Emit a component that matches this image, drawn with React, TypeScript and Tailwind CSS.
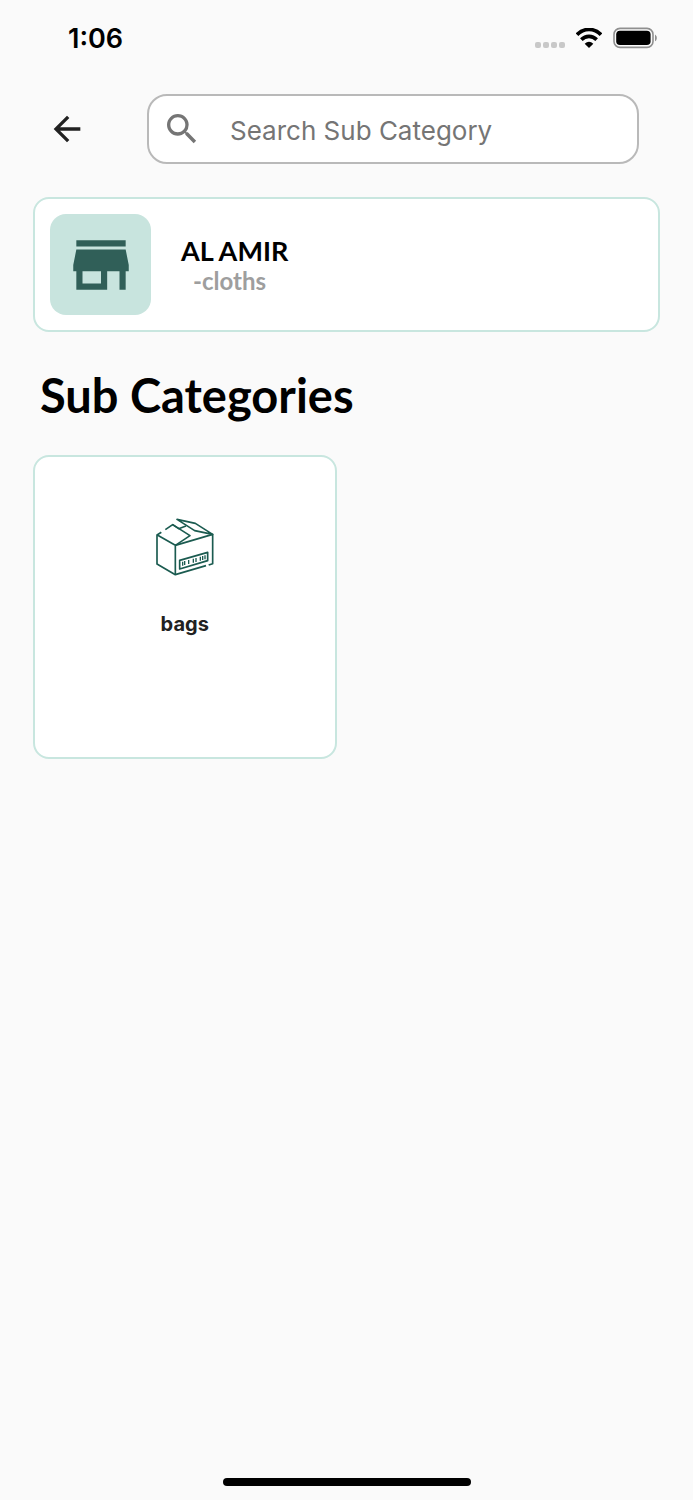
import { MdArrowBack, MdSearch, MdStore } from "react-icons/md";

interface SubCategory {
  id: string;
  name: string;
}

const store = { name: "AL AMIR", category: "cloths" };

const subCategories: SubCategory[] = [{ id: "bags", name: "bags" }];

function WifiIcon() {
  return (
    <svg viewBox="0 0 78 60" className="w-[26px] h-5" fill="none" aria-hidden="true">
      <path d="M3 20C23 -1 55 -1 75 20" stroke="black" strokeWidth="11" />
      <path d="M16 35C29 22 49 22 62 35" stroke="black" strokeWidth="11" />
      <path d="M26 47Q39 36 52 47L39 60Z" fill="black" />
    </svg>
  );
}

function BatteryIcon() {
  return (
    <svg viewBox="0 0 44 22" className="w-11 h-[22px]" fill="none" aria-hidden="true">
      <rect x="1" y="1.4" width="39" height="19" rx="6" stroke="#8f8f8f" strokeWidth="1.6" />
      <rect x="3.2" y="3.8" width="34.4" height="14.2" rx="3.8" fill="black" />
      <path d="M42 7.6c2.4 1.4 2.4 5.2 0 6.6z" fill="#8f8f8f" />
    </svg>
  );
}

function BoxIcon() {
  return (
    <svg
      viewBox="34 24 174 174"
      className="w-[58px] h-[58px]"
      fill="none"
      stroke="#1b5b50"
      strokeWidth="5"
      strokeLinejoin="round"
      aria-hidden="true"
    >
      {/* body */}
      <path d="M50 67L37 75V162L92 194L184 167" />
      <path d="M38 75L92 106V194" />
      <path d="M92 106L204 73V161L192 165" />
      {/* flaps */}
      <path d="M62 59L84 44L136 77L92 106" />
      <path d="M84 44L102 56L124 48" />
      <path d="M97 28L152 40L204 73L150 62Z" />
      {/* label */}
      <path d="M105 151L189 127V152L105 177Z" />
      <path d="M114 155v12M120 153v12M132 150v12M146 146v12M154 144v12M167 140v12M174 138v12M181 136v12" strokeWidth="4" />
    </svg>
  );
}

function StatusBar() {
  return (
    <div className="flex items-center justify-between h-[76px] pl-[68px] pr-9">
      <span className="pt-[2px] text-[27px] leading-8 font-semibold text-black">1:06</span>
      <div className="flex items-center gap-[11px]">
        <div className="flex gap-[2px] pt-[14px]">
          {[0, 1, 2, 3].map((dot) => (
            <span key={dot} className="w-[6px] h-[6px] rounded-[2px] bg-[#c8c8c8]" />
          ))}
        </div>
        <WifiIcon />
        <BatteryIcon />
      </div>
    </div>
  );
}

function SearchBar() {
  return (
    <header className="flex items-center pl-[47px] pr-[54px] mt-[18px]">
      <button type="button" aria-label="Back" className="text-[#212121]">
        <MdArrowBack className="w-10 h-10" />
      </button>
      <label className="flex flex-1 min-w-0 items-center h-[70px] ml-[60px] pl-[13px] pr-4 bg-white border-2 border-[#b9b9b9] rounded-[20px]">
        <MdSearch className="w-10 h-10 flex-shrink-0 text-[#757575]" />
        <input
          type="text"
          aria-label="Search Sub Category"
          placeholder="Search Sub Category"
          className="flex-1 min-w-0 ml-7 pt-1 text-[26px] leading-8 text-[#212121] placeholder:text-[#757575] bg-transparent outline-none"
        />
      </label>
    </header>
  );
}

function StoreCard() {
  return (
    <section className="flex items-center p-[15px] bg-white border-2 border-[#c8e6df] rounded-2xl">
      <div className="flex items-center justify-center w-[101px] h-[101px] flex-shrink-0 rounded-2xl bg-[#c8e4de]">
        <MdStore className="w-[74px] h-[74px] text-[#305f58]" />
      </div>
      <div className="ml-[30px] font-['Lato'] font-bold">
        <h2 className="text-[27px] leading-8 text-black">{store.name}</h2>
        <p className="pl-3 text-2xl leading-7 text-[#9e9e9e]">-{store.category}</p>
      </div>
    </section>
  );
}

function SubCategoryCard({ name }: { name: string }) {
  return (
    <button
      type="button"
      className="flex flex-col items-center aspect-square pt-[61px] bg-white border-2 border-[#c8e6df] rounded-2xl"
    >
      <BoxIcon />
      <span className="mt-[34px] text-xl leading-7 font-bold text-[#212121]">{name}</span>
    </button>
  );
}

export default function App() {
  return (
    <div className="flex flex-col min-h-screen bg-[#fafafa] font-['Inter',sans-serif]">
      <StatusBar />
      <SearchBar />
      <main className="flex-1 px-[33px] pt-[33px]">
        <StoreCard />
        <h1 className="pl-[7px] mt-[33px] text-[47px] leading-[60px] font-['Lato'] font-bold text-black">
          Sub Categories
        </h1>
        <div className="grid grid-cols-2 gap-5 mt-[30px]">
          {subCategories.map((item) => (
            <SubCategoryCard key={item.id} name={item.name} />
          ))}
        </div>
      </main>
      <div className="w-[248px] h-2 mx-auto mb-[14px] rounded-full bg-black" />
    </div>
  );
}
